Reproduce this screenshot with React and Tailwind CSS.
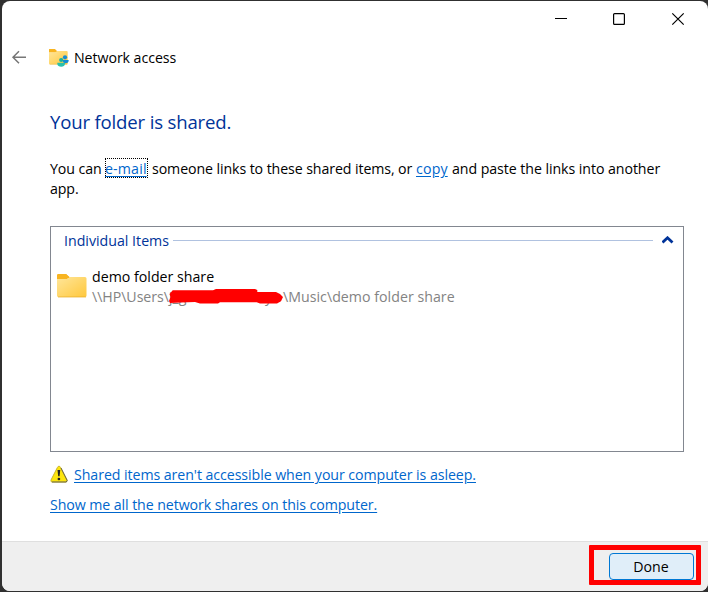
function Folder({ people, className }) {
  return (
    <svg viewBox="0 0 30 24" className={className} fill="none" preserveAspectRatio="none">
      <defs>
        <linearGradient id={people ? "smallFolder" : "largeFolder"} x1="0" y1="0" x2="1" y2="1">
          <stop stopColor="#ffe69a" />
          <stop offset="1" stopColor="#ffc83d" />
        </linearGradient>
      </defs>
      <path d="M0 1.5Q0 0 1.5 0H9l4 4H0Z" fill="#f8b420" />
      <path d="M0 5H10L13 3H28Q29.5 3 29.5 4.5V21.5Q29.5 23 28 23H1.5Q0 23 0 21.5Z" fill={people ? "url(#smallFolder)" : "url(#largeFolder)"} />
      <path d="M0 1.5Q0 0 1.5 0H9L12.5 3L10 5H0Z" fill="#f8b420" />
      <path d="M1 23H29" stroke="#e7a91f" strokeWidth=".7" />
    </svg>
  );
}

function TitleBar() {
  return (
    <div className="flex h-[36px] justify-end text-black">
      <svg width="160" height="36" viewBox="548 1 160 36" fill="none" stroke="currentColor">
        <path d="M555 18.5H567" shapeRendering="crispEdges" />
        <rect x="613.6" y="13.6" width="10.8" height="10.8" rx="1" strokeWidth="1.2" />
        <path d="M672.3 13.3L683.7 24.7M683.7 13.3L672.3 24.7" strokeWidth="1.2" />
      </svg>
    </div>
  );
}

function Heading() {
  return (
    <div className="flex h-[42px] items-center pl-[9px]">
      <svg width="16" height="16" viewBox="0 0 16 16" fill="none" stroke="#777" strokeWidth="1.5" className="shrink-0">
        <path d="M2 7.2H15M8 1.2L2 7.2L8 13.2" />
      </svg>
      <div className="relative ml-[22px] h-[18px] w-[20px]">
        <Folder people className="h-[16px] w-[19px]" />
        <svg width="12" height="12" viewBox="0 0 12 12" className="absolute top-[6px] left-[8px]">
          <circle cx="8" cy="2.3" r="2.1" fill="#168bd4" />
          <path d="M5.5 5H11.6V6.2Q11.3 8.3 8.5 8.3Q6 8.3 5.5 5Z" fill="#168bd4" />
          <circle cx="4.2" cy="5" r="2.1" fill="#19b1a0" />
          <path d="M.3 7.7H8V9Q7.5 11.8 4.2 11.8Q.8 11.8.3 9Z" fill="#29c1ac" />
        </svg>
      </div>
      <h1 className="ml-[5px] text-[14.2px] leading-5 tracking-[-0.07px] whitespace-nowrap">Network access</h1>
    </div>
  );
}

function ItemList() {
  return (
    <section className="mt-[27px] h-[226px] w-[634px] border border-[#828790]">
      <div className="flex h-[27px] items-center pl-[13px] text-[#003399]">
        <h3 className="w-[109px] text-[14.2px] tracking-[0px] whitespace-nowrap">Individual Items</h3>
        <div className="h-px w-[480px] bg-[#b0c2e0]" />
        <svg width="12" height="8" viewBox="0 0 12 8" className="-mt-[2px] ml-[9px]" fill="none" stroke="#003399" strokeWidth="2.8">
          <path d="M.5 6.5L5.5 1.8L10.5 6.5" />
        </svg>
      </div>
      <div className="mt-[13px] flex pl-[6px]">
        <Folder className="mt-[7px] h-[24px] w-[30px]" />
        <div className="ml-[5px] text-[14.2px] leading-5 whitespace-nowrap">
          <div className="tracking-[0px]">demo folder share</div>
          <div className="flex text-[#838383]">
            <span className="w-[76px] tracking-[-0.05px]">\\HP\Users\</span>
            <div className="relative h-5 w-[115px]">
              <span className="absolute left-[1px]">j_g</span>
              <span className="absolute left-[97px]">y</span>
              <svg width="119" height="20" viewBox="0 0 119 20" className="absolute left-0 top-0" fill="red">
                <path d="M4.7 3.3L45 3.3L48 2H87L89.3 3V5H108L112 7L115 10L113 14.3L109 16.5H92L88.7 15.3H52L50 16.5H32L27 15L13 15.5L2 16L1 14L2.5 10L1.5 7Z" />
              </svg>
            </div>
            <span className="tracking-[0.02px]">\Music\demo folder share</span>
          </div>
        </div>
      </div>
    </section>
  );
}

function Warning() {
  return (
    <svg width="18" height="18" viewBox="0 0 18 18" className="-mt-[3px] shrink-0">
      <path d="M9 1.2Q10 1.2 10.6 2.5L17 15Q17.5 17 16 17H2Q.5 17 1 15L7.4 2.5Q8 1.2 9 1.2Z" fill="#fde50d" stroke="#c9b52c" strokeWidth="1" />
      <path d="M2 17H16.2L17.2 15.5L11 3" fill="none" stroke="#6d6847" strokeWidth="1" />
      <path d="M7.5 5H10.2L9.6 11.3H8.2Z" fill="#222" />
      <circle cx="8.9" cy="14" r="1.35" fill="#222" />
    </svg>
  );
}

export default function App() {
  return (
    <div className="h-[592px] w-[708px] overflow-hidden bg-[#303030] pt-px pl-[2px] font-['Open_Sans','Noto_Sans',sans-serif] text-black">
      <main className="flex h-[590px] flex-col overflow-hidden rounded-[8px] bg-white">
        <TitleBar />
        <Heading />
        <div className="h-[462px] pl-[48px]">
          <h2 className="pt-[29px] text-[18.6px] leading-[28px] tracking-[-0.18px] whitespace-nowrap text-[#003399]">Your folder is shared.</h2>
          <div className="mt-[23px] text-[14.2px] leading-5 whitespace-nowrap">
            <div className="flex">
              <span className="w-[55px] tracking-[-0.1px]">You can</span>
              <a className="h-[20px] w-[43px] -mt-px pt-px tracking-[0.15px] text-[#0066cc] underline underline-offset-2 outline-1 outline-dotted -outline-offset-1 outline-black">e-mail</a>
              <span className="ml-[4px] w-[264px] tracking-[-0.1px]">someone links to these shared items, or</span>
              <a className="w-[36px] tracking-[0.15px] text-[#0066cc] underline underline-offset-2">copy</a>
              <span className="tracking-[-0.07px]">and paste the links into another</span>
            </div>
            <div className="tracking-[-0.1px]">app.</div>
          </div>
          <ItemList />
          <div className="mt-[12px] flex h-[22px] items-center text-[14.2px] whitespace-nowrap text-[#0066cc]">
            <Warning />
            <a className="ml-[6px] tracking-[-0.07px] underline underline-offset-2">Shared items aren't accessible when your computer is asleep.</a>
          </div>
          <a className="mt-[9px] block text-[14.2px] leading-5 tracking-[-0.09px] whitespace-nowrap text-[#0066cc] underline underline-offset-2">Show me all the network shares on this computer.</a>
        </div>
        <footer className="flex flex-1 justify-end border-t border-[#dfdfdf] bg-[#efefef] pt-[3px] pr-[7px]">
          <div className="flex h-[40px] w-[112px] justify-end rounded-[1px] border-[5px] border-[#ff0000] pt-[3px] pr-[2px]">
            <button className="h-[27px] w-[85px] rounded-[4px] border border-[#0078d4] bg-[#e0eef9] pr-px text-[14.2px] leading-[24px]">Done</button>
          </div>
        </footer>
      </main>
    </div>
  );
}
